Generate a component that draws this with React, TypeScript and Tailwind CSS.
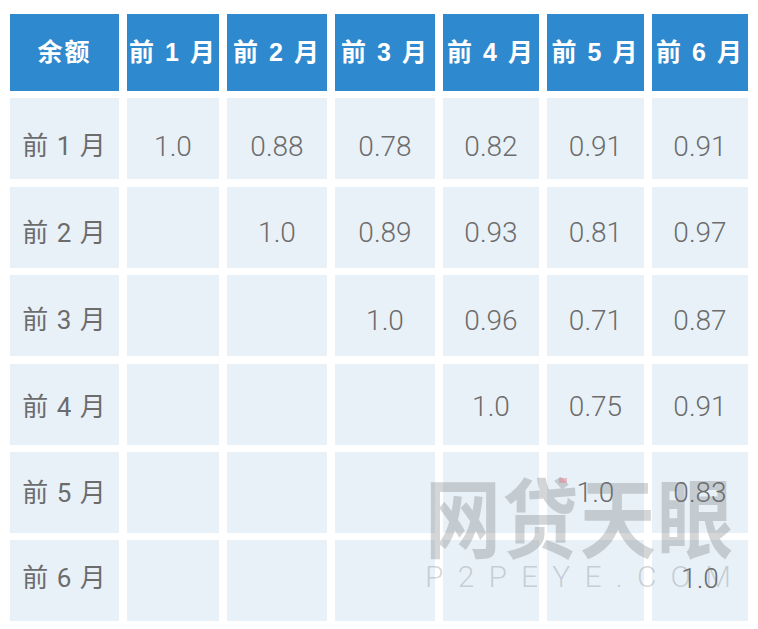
import React from "react";

const headers = ["余额", "前 1 月", "前 2 月", "前 3 月", "前 4 月", "前 5 月", "前 6 月"];

const rows: (string | null)[][] = [
  ["1.0", "0.88", "0.78", "0.82", "0.91", "0.91"],
  [null, "1.0", "0.89", "0.93", "0.81", "0.97"],
  [null, null, "1.0", "0.96", "0.71", "0.87"],
  [null, null, null, "1.0", "0.75", "0.91"],
  [null, null, null, null, "1.0", "0.83"],
  [null, null, null, null, null, "1.0"],
];

// text sits a little lower in the top rows than in the bottom ones
const shift = [
  "translate-y-[8px]",
  "translate-y-[6px]",
  "translate-y-[4.5px]",
  "translate-y-[3px]",
  "translate-y-[1px]",
  "-translate-y-[2px]",
];

export default function App() {
  return (
    <div className="relative w-[758px] h-[629px] bg-white overflow-hidden pt-[14px] pl-[10px]">
      <div className="grid grid-cols-[109px_92px_100px_100px_96px_97px_96px] grid-rows-[77px_repeat(6,81px)] gap-x-[8px] gap-y-[7.4px]">
        {headers.map((h) => (
          <div
            key={h}
            className="flex items-center justify-center bg-[#2e89ce] text-white font-bold text-[25px] tracking-[2px] whitespace-pre font-['Liberation_Sans','Noto_Sans_CJK_SC',sans-serif]"
          >
            {h}
          </div>
        ))}
        {rows.map((row, r) => (
          <React.Fragment key={r}>
            <div className="flex items-center justify-center bg-[#e9f1f8] text-[#6c6c6c] text-[26px] tracking-[1px] whitespace-pre font-['Roboto','Noto_Sans_CJK_SC',sans-serif]">
              <span className={shift[r]}>{`前 ${r + 1} 月`}</span>
            </div>
            {row.map((v, c) => (
              <div
                key={c}
                className="flex items-center justify-center bg-[#e9f1f8] text-[#6c6c6c] text-[28px] font-light font-['Roboto','Noto_Sans_CJK_SC',sans-serif]"
              >
                {v && <span className={shift[r]}>{v}</span>}
              </div>
            ))}
          </React.Fragment>
        ))}
      </div>

      {/* watermark */}
      <div className="absolute left-[425px] top-[470px] w-[308px] pointer-events-none">
        <div className="flex justify-between text-[76px] leading-none font-bold text-[rgba(110,115,120,0.3)] scale-y-[1.15] origin-top font-['Noto_Sans_CJK_SC',sans-serif]">
          <span>网</span>
          <span>贷</span>
          <span>天</span>
          <span>眼</span>
        </div>
        <div className="absolute left-[134px] top-[8px] w-[8px] h-[5px] bg-[rgba(230,120,130,0.45)]" />
        <div className="flex justify-between w-[306px] mt-[16px] text-[30px] leading-none font-light text-[rgba(110,115,120,0.3)] font-['Roboto',sans-serif]">
          {"P2PEYE.COM".split("").map((ch, i) => (
            <span key={i}>{ch}</span>
          ))}
        </div>
      </div>
    </div>
  );
}
